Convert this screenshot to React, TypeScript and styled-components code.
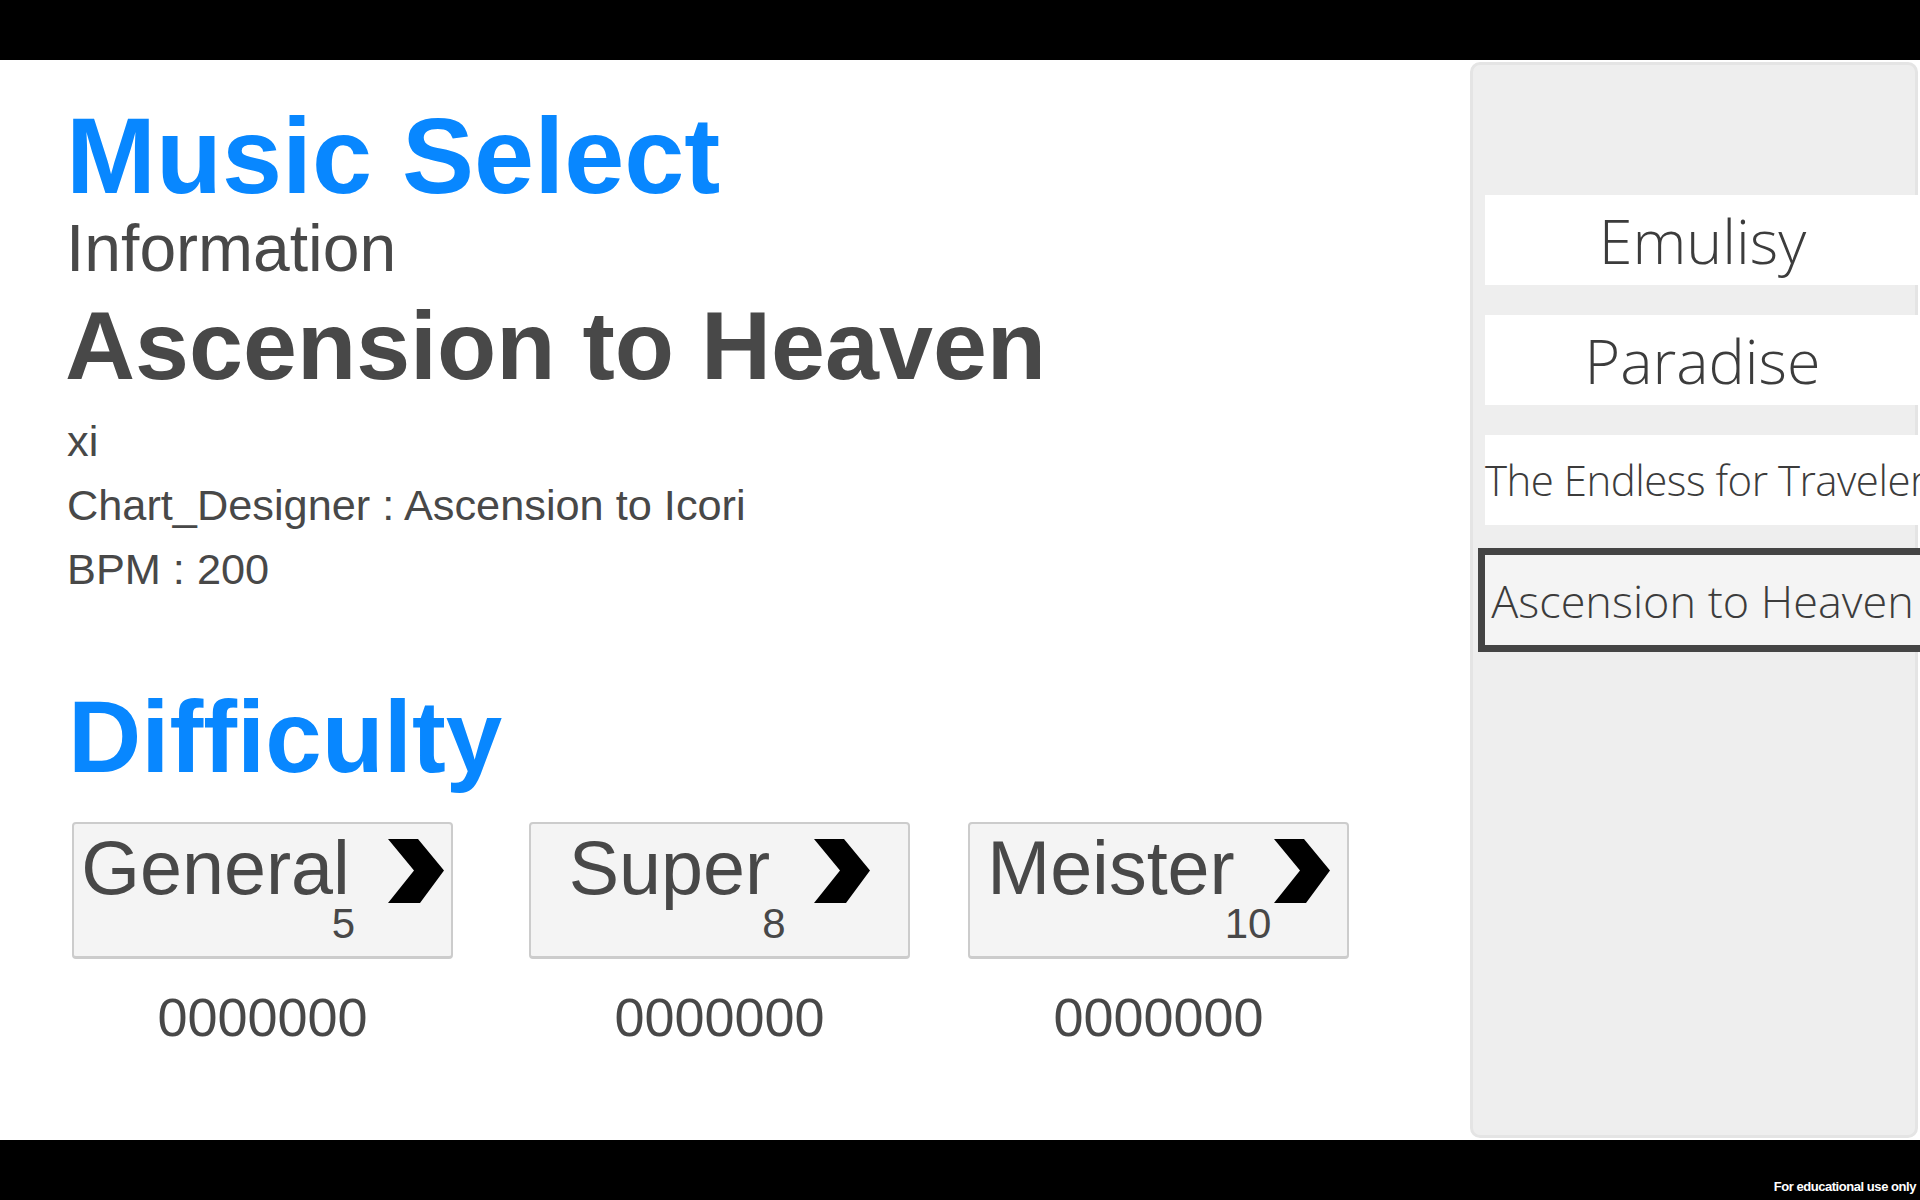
import React from "react";
import styled, { createGlobalStyle } from "styled-components";

const GlobalStyle = createGlobalStyle`
  html, body {
    margin: 0;
    padding: 0;
    background: #000;
    overflow: hidden;
  }
  * { box-sizing: border-box; }
`;

const Screen = styled.div`
  width: 1920px;
  height: 1200px;
  display: grid;
  grid-template-rows: 60px 1fr 60px;
  background: #000;
  overflow: hidden;
`;

const TopBar = styled.div`
  background: #000;
`;

const BottomBar = styled.div`
  background: #000;
  display: flex;
  justify-content: flex-end;
  align-items: flex-end;
  padding: 0 4px 6px 0;
`;

const Notice = styled.span`
  font-family: "Liberation Sans", Arial, sans-serif;
  font-weight: 700;
  font-size: 13px;
  line-height: 14px;
  letter-spacing: -0.45px;
  color: #fff;
`;

const Stage = styled.div`
  background: #fff;
  display: flex;
  min-height: 0;
`;

const Main = styled.main`
  flex: 1;
  padding: 39px 0 0 66px;
  display: flex;
  flex-direction: column;
  font-family: "Liberation Sans", Arial, sans-serif;
  color: #484848;
`;

const Heading = styled.h1<{ $top?: number; $size: number; $left?: number }>`
  margin: ${(p) => p.$top ?? 0}px 0 0 ${(p) => p.$left ?? 0}px;
  font-size: ${(p) => p.$size}px;
  line-height: 113px;
  font-weight: 700;
  color: #0887ff;
`;

const SubHeading = styled.div`
  margin-top: 1px;
  font-size: 66px;
  line-height: 70px;
`;

const SongTitle = styled.h2`
  margin: 13px 0 0 -1px;
  font-size: 97px;
  line-height: 100px;
  font-weight: 700;
  color: #484848;
`;

const InfoList = styled.div`
  margin: 13px 0 0 1px;
  display: flex;
  flex-direction: column;
`;

const InfoLine = styled.div`
  font-size: 43.3px;
  line-height: 64px;
`;

const DifficultyRow = styled.div`
  margin-top: 28px;
  padding-left: 6px;
  display: flex;
  align-items: flex-start;
`;

const DifficultyColumn = styled.div<{ $offset: number }>`
  margin-left: ${(p) => p.$offset}px;
  width: 381px;
  display: flex;
  flex-direction: column;
`;

const DiffButton = styled.div`
  width: 381px;
  height: 137px;
  background: #f4f4f4;
  border: 2px solid #cccccc;
  border-bottom-width: 3px;
  border-radius: 4px;
  display: flex;
  justify-content: center;
  align-items: flex-start;
  padding-top: 4px;
`;

const DiffLabel = styled.span`
  position: relative;
  font-size: 75.5px;
  line-height: 80px;
  color: #484848;
  white-space: nowrap;
`;

const DiffLevel = styled.span<{ $shift: number }>`
  position: absolute;
  left: calc(100% + ${(p) => p.$shift}px);
  top: 76px;
  font-size: 42px;
  line-height: 40px;
  color: #484848;
`;

const Chevron = styled.svg<{ $gap: number }>`
  flex: none;
  margin: 11px 0 0 ${(p) => p.$gap}px;
  width: 56px;
  height: 64px;
`;

const Score = styled.div`
  margin-top: 28px;
  text-align: center;
  font-size: 54px;
  line-height: 60px;
  color: #484848;
`;

const Sidebar = styled.aside`
  width: 448px;
  margin: 2px 2px 2px 0;
  background: #eeeeee;
  border: 3px solid #e4e4e4;
  border-radius: 10px;
  padding: 130px 0 0 12px;
  display: flex;
  flex-direction: column;
  gap: 30px;
`;

const SongItem = styled.div<{ $selected?: boolean; $size: number; $tracking: number }>`
  flex: none;
  width: 435px;
  height: 90px;
  display: flex;
  align-items: center;
  justify-content: safe center;
  background: ${(p) => (p.$selected ? "#f4f4f4" : "#ffffff")};
  outline: ${(p) => (p.$selected ? "7px solid #444444" : "none")};
  font-family: "Open Sans", "Noto Sans", sans-serif;
  font-weight: 300;
  font-size: ${(p) => p.$size}px;
  letter-spacing: ${(p) => p.$tracking}px;
  line-height: 1;
  color: #3c3c3c;
  white-space: nowrap;
`;

const difficulties = [
  { name: "General", level: "5", shift: -18, offset: 0, gap: 38 },
  { name: "Super", level: "8", shift: -8, offset: 76, gap: 44 },
  { name: "Meister", level: "10", shift: -10, offset: 58, gap: 39 },
];

const songs = [
  { title: "Emulisy", size: 61, tracking: 0 },
  { title: "Paradise", size: 61, tracking: 0 },
  { title: "The Endless for Traveler", size: 42, tracking: -0.5 },
  { title: "Ascension to Heaven", size: 45, tracking: 0, selected: true },
];

function ChevronIcon({ gap }: { gap: number }) {
  return (
    <Chevron $gap={gap} viewBox="0 0 56 64" aria-hidden="true">
      <polygon points="0,0 30,0 56,31.5 32,64 0,64 26,31.5" fill="#000" />
    </Chevron>
  );
}

export default function App() {
  return (
    <>
      <GlobalStyle />
      <Screen>
        <TopBar />
        <Stage>
          <Main>
            <Heading $size={108}>Music Select</Heading>
            <SubHeading>Information</SubHeading>
            <SongTitle>Ascension to Heaven</SongTitle>
            <InfoList>
              <InfoLine>xi</InfoLine>
              <InfoLine>Chart_Designer : Ascension to Icori</InfoLine>
              <InfoLine>BPM : 200</InfoLine>
            </InfoList>
            <Heading $size={101.5} $top={80} $left={2}>
              Difficulty
            </Heading>
            <DifficultyRow>
              {difficulties.map((d) => (
                <DifficultyColumn key={d.name} $offset={d.offset}>
                  <DiffButton>
                    <DiffLabel>
                      {d.name}
                      <DiffLevel $shift={d.shift}>{d.level}</DiffLevel>
                    </DiffLabel>
                    <ChevronIcon gap={d.gap} />
                  </DiffButton>
                  <Score>0000000</Score>
                </DifficultyColumn>
              ))}
            </DifficultyRow>
          </Main>
          <Sidebar>
            {songs.map((s) => (
              <SongItem
                key={s.title}
                $selected={s.selected}
                $size={s.size}
                $tracking={s.tracking}
              >
                {s.title}
              </SongItem>
            ))}
          </Sidebar>
        </Stage>
        <BottomBar>
          <Notice>For educational use only</Notice>
        </BottomBar>
      </Screen>
    </>
  );
}
